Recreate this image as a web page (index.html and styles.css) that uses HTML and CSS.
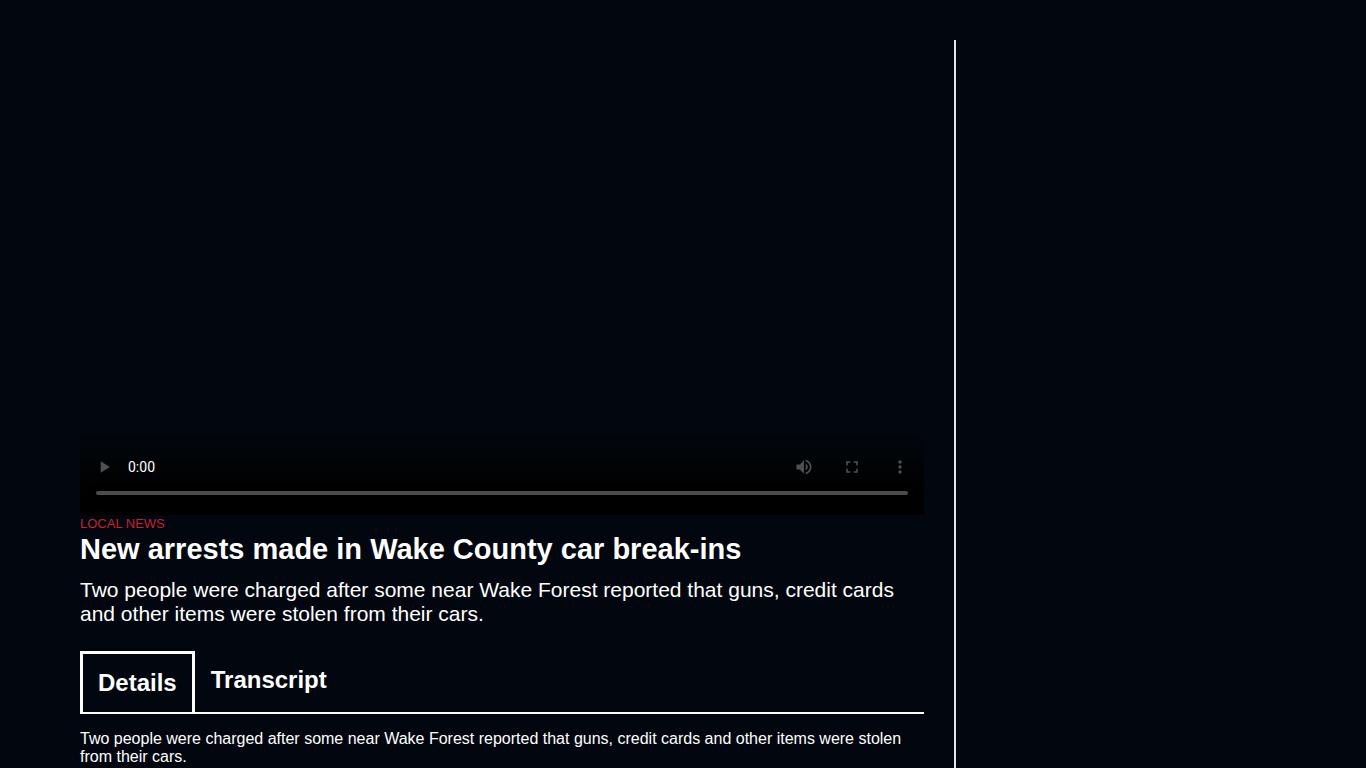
FILE: index.html
```
<!DOCTYPE html>
<html lang="en">
<head>
    <meta charset="UTF-8">
    <meta name="viewport" content="width=device-width, initial-scale=1.0">
    <title>New arrests made in Wake County car break-ins</title>
    <link rel="stylesheet" href="styles.css">
</head>
<body>
    <div class="container">
        <main class="story">
            <!-- empty poster keeps the player transparent before a clip is loaded -->
            <video class="player" controls poster="data:image/svg+xml,%3Csvg xmlns='http://www.w3.org/2000/svg' width='16' height='9'/%3E"></video>
            <p class="category">LOCAL NEWS</p>
            <h1>New arrests made in Wake County car break-ins</h1>
            <p class="summary">Two people were charged after some near Wake Forest reported that guns, credit cards and other items were stolen from their cars.</p>
            <div class="tabs" role="tablist">
                <button class="tab active" role="tab" aria-selected="true" aria-controls="details" id="details-tab">Details</button>
                <button class="tab" role="tab" aria-selected="false">Transcript</button>
            </div>
            <div class="tab-content" role="tabpanel" id="details" aria-labelledby="details-tab">
                <p>Two people were charged after some near Wake Forest reported that guns, credit cards and other items were stolen from their cars.</p>
            </div>
        </main>
        <aside class="sidebar"></aside>
    </div>
</body>
</html>
```
FILE: styles.css
```
* {
    box-sizing: border-box;
}
body {
    margin: 0;
    background-color: #02070f;
    color: #fff;
    font-family: "Liberation Sans", Arial, sans-serif;
}
h1, p {
    margin: 0;
}
.container {
    display: flex;
    min-height: 100vh;
    padding: 40px 80px 0;
}
.story {
    flex: 1;
    padding-right: 30px;
}
.sidebar {
    width: 332px;
    border-left: 2px solid #e2e4ee;
}
.player {
    display: block;
    width: 100%;
    aspect-ratio: 16 / 9;
}
.category {
    color: #c8202f;
    font-size: 13px;
    line-height: 18px;
}
h1 {
    font-size: 29px;
    line-height: 32px;
}
.summary {
    margin-top: 13px;
    font-size: 21px;
    line-height: 24px;
}
.tabs {
    display: flex;
    align-items: flex-start;
    margin-top: 25px;
    border-bottom: 2px solid #fff;
}
.tab {
    padding: 15px 16px;
    border: 0;
    background: none;
    color: #fff;
    font-family: inherit;
    font-size: 24px;
    font-weight: bold;
    line-height: 28px;
    cursor: pointer;
}
.tab.active {
    padding: 15px;
    border: 3px solid #fff;
    border-bottom: 0;
}
.tab-content {
    padding-top: 16px;
    font-size: 16px;
    line-height: 18px;
}
```
